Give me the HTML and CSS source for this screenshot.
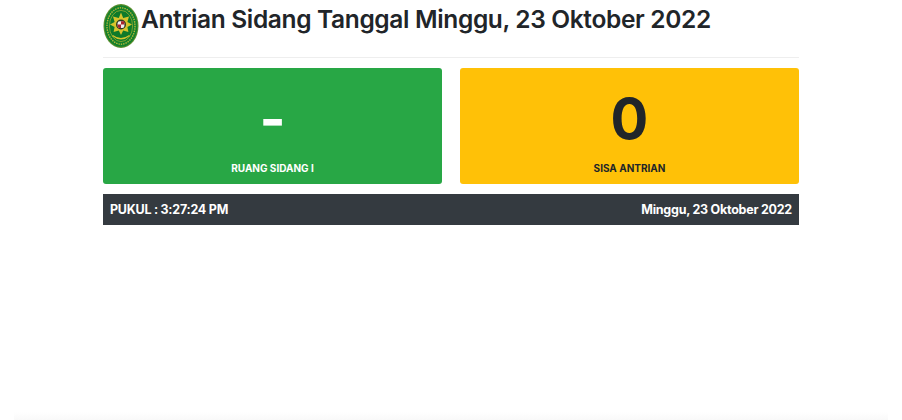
FILE: index.html
```html
<!DOCTYPE html>
<html lang="id">
<head>
<meta charset="utf-8">
<title>Antrian Sidang</title>
<link rel="stylesheet" href="styles.css">
</head>
<body>
<main class="container">
  <header class="title-row">
    <svg class="logo" viewBox="0 0 36 44" aria-hidden="true">
      <ellipse cx="18" cy="22" rx="17.5" ry="22" fill="#5b8f2e"/>
      <ellipse cx="18" cy="22" rx="16.4" ry="20.8" fill="#12802c"/>
      <ellipse cx="18" cy="22" rx="14" ry="18.2" fill="none" stroke="#b9b83a" stroke-width="1.4" stroke-dasharray="1.4 1"/>
      <ellipse cx="18" cy="22" rx="11.6" ry="15.6" fill="#0d7a2a" stroke="#a8b030" stroke-width="0.7"/>
      <path d="M18 8.5l2.2 5.5 5.8-1.6-1.6 5.6 4.6 2.5-4.6 2.5 1 5-5.2-1.4-2.2 4.4-2.2-4.4-5.2 1.4 1-5-4.6-2.5 4.6-2.5-1.6-5.6 5.8 1.6z" fill="#d6c42c"/>
      <circle cx="18" cy="20.5" r="5" fill="#2f3a22"/>
      <rect x="14.6" y="17.2" width="6.8" height="6.8" rx="2" fill="#f0eeee"/>
      <path d="M18 17.2h3.4v3.4h-3.4zM14.6 20.6h3.4v3.4h-1.4q-2 0-2-2z" fill="#a8262c"/>
      <path d="M9.5 31.5q8.500 6.500 17 0" fill="none" stroke="#d6c42c" stroke-width="1.3"/>
    </svg>
    <h1 class="title">Antrian Sidang Tanggal Minggu, 23 Oktober 2022</h1>
  </header>
  <hr class="divider">
  <section class="cards">
    <div class="card card-green">
      <div class="card-value">-</div>
      <div class="card-label">RUANG SIDANG I</div>
    </div>
    <div class="card card-yellow">
      <div class="card-value">0</div>
      <div class="card-label">SISA ANTRIAN</div>
    </div>
  </section>
  <footer class="status">
    <span>PUKUL : 3:27:24 PM</span>
    <span>Minggu, 23 Oktober 2022</span>
  </footer>
</main>
<div class="bottom-fade"></div>
</body>
</html>
```
FILE: styles.css
```css
* { box-sizing: border-box; }
html, body { height: 100%; }
body {
  margin: 0;
  background: #fff;
  color: #212529;
  font-family: Inter, "Liberation Sans", sans-serif;
  overflow: hidden;
}
.container {
  width: 696px;
  margin-left: 103px;
  padding-top: 4px;
}
.title-row {
  display: flex;
  align-items: flex-start;
  height: 44px;
}
.logo {
  width: 36px;
  height: 44px;
  flex: none;
}
.title {
  margin: -1px 0 0 2px;
  font-size: 24.5px;
  line-height: 32px;
  font-weight: 600;
  letter-spacing: -0.35px;
}
.divider {
  margin: 9px 0 10px;
  border: 0;
  border-top: 1px solid #eee;
}
.cards {
  display: grid;
  grid-template-columns: 339px 339px;
  column-gap: 18px;
}
.card {
  height: 116px;
  border-radius: 3px;
  display: flex;
  flex-direction: column;
  align-items: center;
  padding-top: 19px;
}
.card-green { background: #28a745; color: #fff; }
.card-yellow { background: #ffc107; color: #212529; }
.card-value {
  font-size: 56px;
  line-height: 64px;
  font-weight: 700;
}
.card-label {
  margin-top: 10px;
  font-size: 10px;
  line-height: 14px;
  font-weight: 700;
}
.status {
  margin-top: 10px;
  height: 31px;
  background: #343a40;
  color: #fff;
  display: flex;
  justify-content: space-between;
  align-items: center;
  padding: 0 7px;
  font-size: 12.5px;
  font-weight: 700;
  letter-spacing: -0.25px;
}
.bottom-fade {
  position: fixed;
  left: 14px;
  right: 14px;
  bottom: 0;
  height: 8px;
  background: linear-gradient(to bottom, #fff, #f9f9f9);
}
```
